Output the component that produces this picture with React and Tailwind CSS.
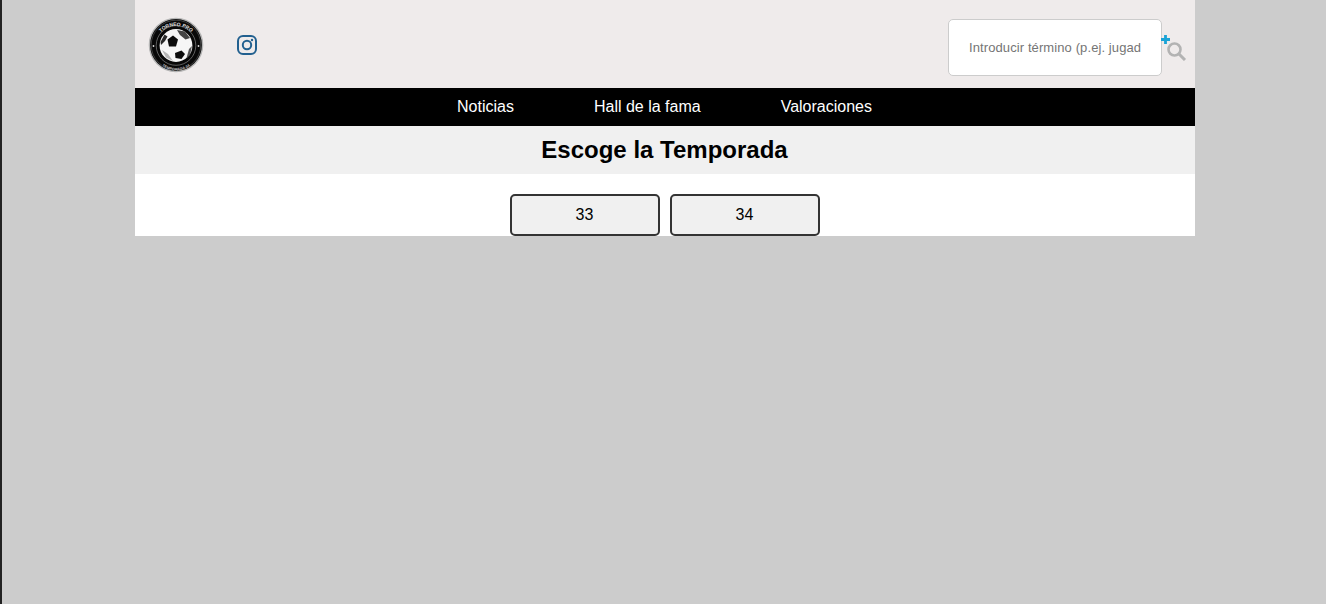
import React from "react";

const Logo = () => (
    <svg width="56" height="56" viewBox="0 0 56 56" className="block">
        <defs>
            <path id="logoTop" d="M7 30 A21 21 0 0 1 49 30" />
            <path id="logoBottom" d="M4.5 30 A23.5 23.5 0 0 0 51.5 30" />
        </defs>
        <circle cx="28" cy="28" r="26.6" fill="#080808" stroke="#b5b5b5" strokeWidth="1.4" />
        <circle cx="28" cy="28" r="24.8" fill="none" stroke="#777" strokeWidth="0.5" />
        <circle cx="28" cy="28.5" r="19.8" fill="none" stroke="#999" strokeWidth="0.6" />
        <circle cx="28" cy="28.5" r="16.4" fill="#f6f6f6" />
        <polygon points="19.5,22.5 25,18.5 30,22.5 28,29.5 21,29.5" fill="#0c0c0c" />
        <polygon points="12.5,25 16.5,17.5 19.5,19.5 17,24 13,28" fill="#2a2a2a" />
        <polygon points="29,13 37,14.5 42,21 37.5,22.5 32,18" fill="#444" />
        <polygon points="27,36 33.5,33.5 37,37 33.5,42 27.5,41" fill="#0c0c0c" />
        <polygon points="41,32 44,29 42,38 38.5,41" fill="#555" />
        <polygon points="14,33 20,37 25,44 18,40.5" fill="#b5b5b5" />
        <circle cx="5.5" cy="29" r="0.9" fill="#ddd" />
        <circle cx="50.5" cy="29" r="0.9" fill="#ddd" />
        <text fill="#e5e5e5" fontSize="5" fontWeight="700" fontFamily="Liberation Sans, sans-serif" textAnchor="middle">
            <textPath href="#logoTop" startOffset="50%">TORNEO PRO</textPath>
        </text>
        <text fill="#bbb" fontSize="3.8" fontWeight="700" fontFamily="Liberation Sans, sans-serif" textAnchor="middle">
            <textPath href="#logoBottom" startOffset="50%">TEMPORADA 34</textPath>
        </text>
    </svg>
);

const Instagram = () => (
    <svg width="20" height="20" viewBox="0 0 20 20" fill="none" stroke="#22608f" className="block">
        <rect x="1" y="1" width="18" height="18" rx="5" strokeWidth="2" />
        <circle cx="10" cy="10" r="4.2" strokeWidth="2" />
        <circle cx="15" cy="5" r="1.2" fill="#22608f" stroke="none" />
    </svg>
);

const SearchIcon = () => (
    <svg width="26" height="26" viewBox="0 0 26 26" fill="none" className="block">
        <path d="M0 4.5h9M4.5 0v9" stroke="#1aa3d6" strokeWidth="2.8" />
        <circle cx="13.5" cy="14.5" r="6" stroke="#b3b3b3" strokeWidth="2.6" />
        <path d="M18 19l6 6" stroke="#b3b3b3" strokeWidth="3" />
    </svg>
);

const SeasonButton = ({ label }) => (
    <div className="w-[150px] h-[42px] pr-px rounded-[5px] border-2 border-[#333] bg-[#f0f0f0] flex items-center justify-center text-base text-black">
        {label}
    </div>
);

export default function App() {
    const links = ["Noticias", "Hall de la fama", "Valoraciones"];

    return (
        <div className="min-h-[604px] bg-[#cccccc] border-l-2 border-[#222] font-['Liberation_Sans',Arial,sans-serif]">
            <div className="w-[1060px] ml-[133px]">
                <header className="h-[88px] bg-[#efebeb] flex items-start">
                    <div className="ml-[13px] mt-[17px]">
                        <Logo />
                    </div>
                    <div className="ml-[33px] mt-[35px]">
                        <Instagram />
                    </div>
                    <div className="ml-auto mr-[8px] mt-[19px] flex items-start">
                        <div className="w-[214px] h-[57px] bg-white border border-[#ccc] rounded-[5px] flex items-center pl-[20px] overflow-hidden whitespace-nowrap text-[13px] tracking-[0.1px] text-[#757575]">
                            Introducir término (p.ej. jugad
                        </div>
                        <div className="-ml-px mt-[16px]">
                            <SearchIcon />
                        </div>
                    </div>
                </header>
                <nav className="h-[38px] pr-px bg-black flex items-center justify-center gap-[80px] text-base text-white">
                    {links.map((link) => (
                        <span key={link}>{link}</span>
                    ))}
                </nav>
                <div className="h-[48px] pr-px bg-[#f0f0f0] flex items-center justify-center text-2xl font-bold text-black">
                    Escoge la Temporada
                </div>
                <div className="h-[62px] bg-white pt-[20px] flex justify-center gap-[10px]">
                    <SeasonButton label="33" />
                    <SeasonButton label="34" />
                </div>
            </div>
        </div>
    );
}
